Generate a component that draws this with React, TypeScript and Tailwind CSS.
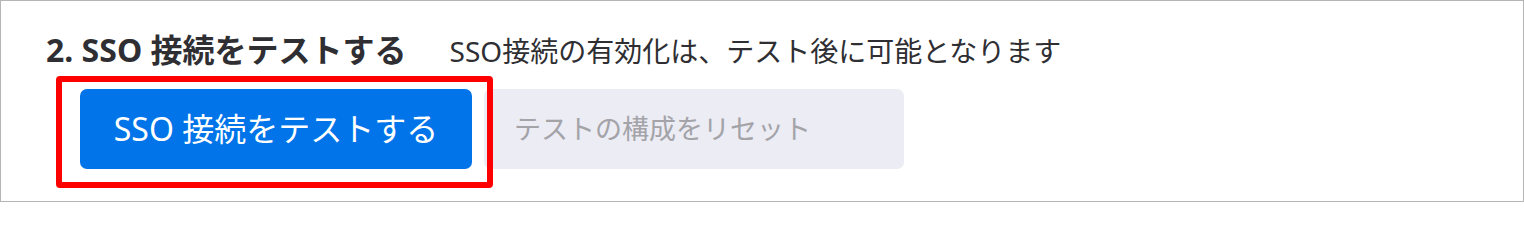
const font = { fontFamily: '"Noto Sans", "Noto Sans CJK JP", sans-serif' };

export default function App() {
  return (
    <div
      className="w-[1524px] h-[202px] border border-[#b5b5b5] bg-white pl-[45px] pt-[28px]"
      style={font}
    >
      <div className="flex items-baseline gap-[43px]">
        <h2 className="text-[32px] leading-[42px] font-bold text-[#2f2f33]">2. SSO 接続をテストする</h2>
        <p className="text-[28px] leading-[42px] text-[#2f2f33]">SSO接続の有効化は、テスト後に可能となります</p>
      </div>
      <div className="relative mt-[17px] ml-[34px] flex gap-3">
        <button className="h-[80px] w-[392px] rounded-[7px] bg-[#0074e8] text-[32px] text-white">
          SSO 接続をテストする
        </button>
        <button className="h-[80px] w-[420px] rounded-[7px] bg-[#ececf4] pl-[30px] text-left text-[27px] text-[#a3a3a8]">
          テストの構成をリセット
        </button>
        <div className="pointer-events-none absolute left-[-24px] top-[-13px] h-[112px] w-[437px] rounded-[4px] border-[6px] border-[#ff0000]" />
      </div>
    </div>
  );
}
